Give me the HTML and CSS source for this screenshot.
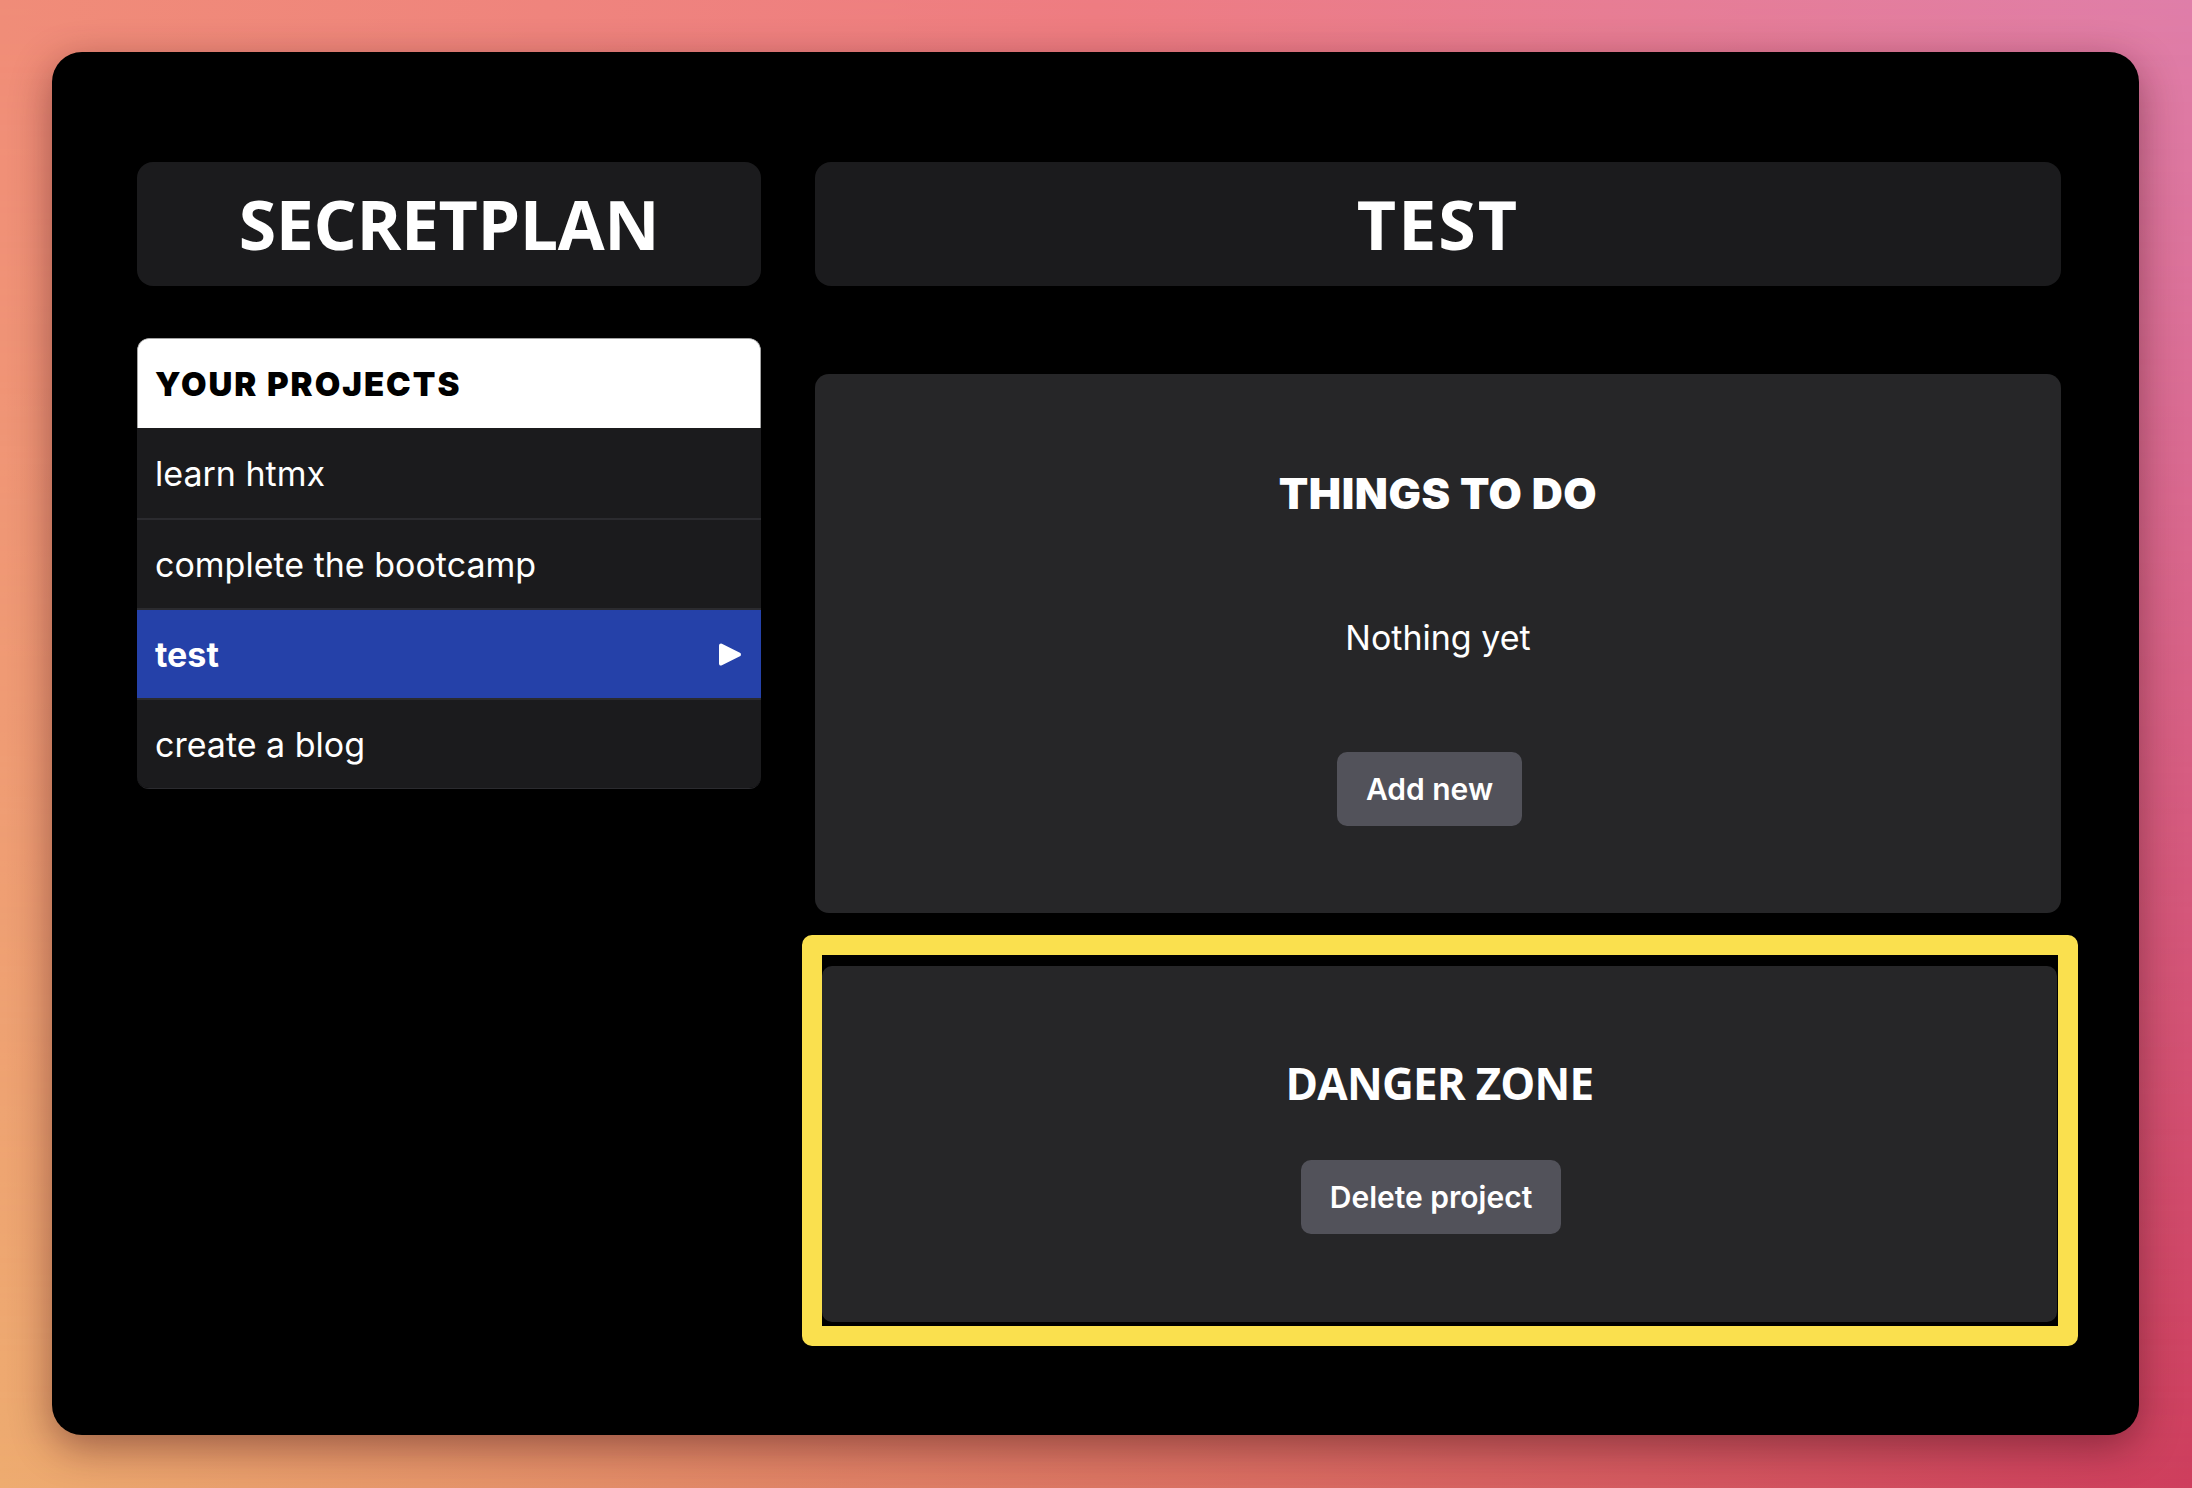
FILE: index.html
```html
<!DOCTYPE html>
<html lang="en">
<head>
<meta charset="utf-8">
<title>SecretPlan</title>
<link rel="stylesheet" href="styles.css">
</head>
<body>
<div class="backdrop"></div>
<div class="window">
  <aside class="sidebar">
    <div class="brand">SECRETPLAN</div>
    <div class="projects">
      <div class="projects-head">YOUR PROJECTS</div>
      <ul class="project-list">
        <li class="project">learn htmx</li>
        <li class="project">complete the bootcamp</li>
        <li class="project active">
          <span>test</span>
          <svg class="arrow" width="26" height="25" viewBox="0 0 26 25"><polygon points="4,3.5 22,12.5 4,21.5" fill="#fff" stroke="#fff" stroke-width="4" stroke-linejoin="round"/></svg>
        </li>
        <li class="project">create a blog</li>
      </ul>
    </div>
  </aside>
  <main class="main">
    <div class="title-box"><h1 class="display">TEST</h1></div>
    <section class="card todo">
      <h2 class="card-title">THINGS TO DO</h2>
      <p class="empty">Nothing yet</p>
      <button class="btn">Add new</button>
    </section>
    <div class="highlight">
      <section class="card danger">
        <h2 class="danger-title">DANGER ZONE</h2>
        <button class="btn">Delete project</button>
      </section>
    </div>
  </main>
</div>
</body>
</html>
```
FILE: styles.css
```css
* { box-sizing: border-box; }

html, body {
  margin: 0;
  width: 2192px;
  height: 1488px;
  overflow: hidden;
}

body {
  position: relative;
  padding: 52px 0 0 52px;
  font-family: "Inter", "Liberation Sans", sans-serif;
  color: #fff;
  background: linear-gradient(to right, #eeac70 0%, #dc7663 50%, #ce3e5d 100%);
}

.backdrop {
  position: absolute;
  inset: 0;
  background: linear-gradient(to right, #f08c78 0%, #ee7c82 50%, #df7ea9 100%);
  -webkit-mask-image: linear-gradient(to bottom, #000 0%, rgba(0,0,0,0) 100%);
  mask-image: linear-gradient(to bottom, #000 0%, rgba(0,0,0,0) 100%);
}

.window {
  position: relative;
  width: 2087px;
  height: 1383px;
  background: #000;
  border-radius: 30px;
  box-shadow: 0 12px 40px rgba(60, 10, 20, 0.45);
  display: flex;
  gap: 54px;
  padding: 110px 78px 0 85px;
}

.sidebar {
  width: 624px;
  flex: none;
}

.brand,
.title-box {
  height: 124px;
  background: #1b1b1d;
  border-radius: 16px;
  display: flex;
  align-items: center;
  justify-content: center;
  font-family: "Open Sans", "DejaVu Sans", sans-serif;
  font-weight: 700;
  font-size: 68px;
  letter-spacing: -0.4px;
  line-height: 1;
}

.display {
  margin: 0;
  font: inherit;
  letter-spacing: 2px;
}

.projects {
  margin-top: 52px;
  border-radius: 12px;
  overflow: hidden;
  border-bottom: 1px solid #2b2b2f;
}

.projects-head {
  height: 90px;
  background: #fff;
  color: #000;
  border: 1px solid #a3a3a3;
  border-bottom: none;
  border-radius: 12px 12px 0 0;
  display: flex;
  align-items: center;
  padding-left: 17px;
  font-weight: 900;
  font-size: 33px;
  letter-spacing: 2px;
}

.project-list {
  list-style: none;
  margin: 0;
  padding: 0;
}

.project {
  height: 90px;
  background: #1b1b1d;
  display: flex;
  align-items: center;
  justify-content: space-between;
  padding: 0 18px;
  font-size: 34px;
}

.project + .project { border-top: 2px solid #2b2b2f; }

.project.active {
  background: #2541a9;
  font-weight: 700;
}

.arrow { display: block; }

.main {
  flex: 1;
  min-width: 0;
}

.card {
  background: #262628;
  border-radius: 14px;
  display: flex;
  flex-direction: column;
  align-items: center;
}

.todo {
  margin-top: 88px;
  height: 539px;
  padding-top: 93px;
}

.card-title {
  margin: 0;
  font-weight: 900;
  font-size: 43px;
  line-height: 52px;
  letter-spacing: 0.6px;
}

.empty {
  margin: 99px 0 0;
  font-size: 34px;
  line-height: 40px;
}

.btn {
  margin-right: 17px;
  background: #52525a;
  color: #fff;
  border: none;
  border-radius: 10px;
  font-family: "Inter", "Liberation Sans", sans-serif;
  font-weight: 600;
  font-size: 30px;
  line-height: 36px;
  height: 74px;
  padding: 0 29px;
}

.todo .btn { margin-top: 94px; }

.highlight {
  margin: 22px -17px 0 -13px;
  border: 20px solid #fae04e;
  border-radius: 10px;
  background: #000;
  padding: 11px 1px 4px 0;
}

.danger {
  height: 356px;
  padding-top: 87px;
  border-radius: 10px;
}

.danger-title {
  margin: 0;
  font-family: "Open Sans", "DejaVu Sans", sans-serif;
  font-weight: 700;
  font-size: 44px;
  line-height: 60px;
  letter-spacing: -0.8px;
}

.danger .btn { margin-top: 47px; }
```
